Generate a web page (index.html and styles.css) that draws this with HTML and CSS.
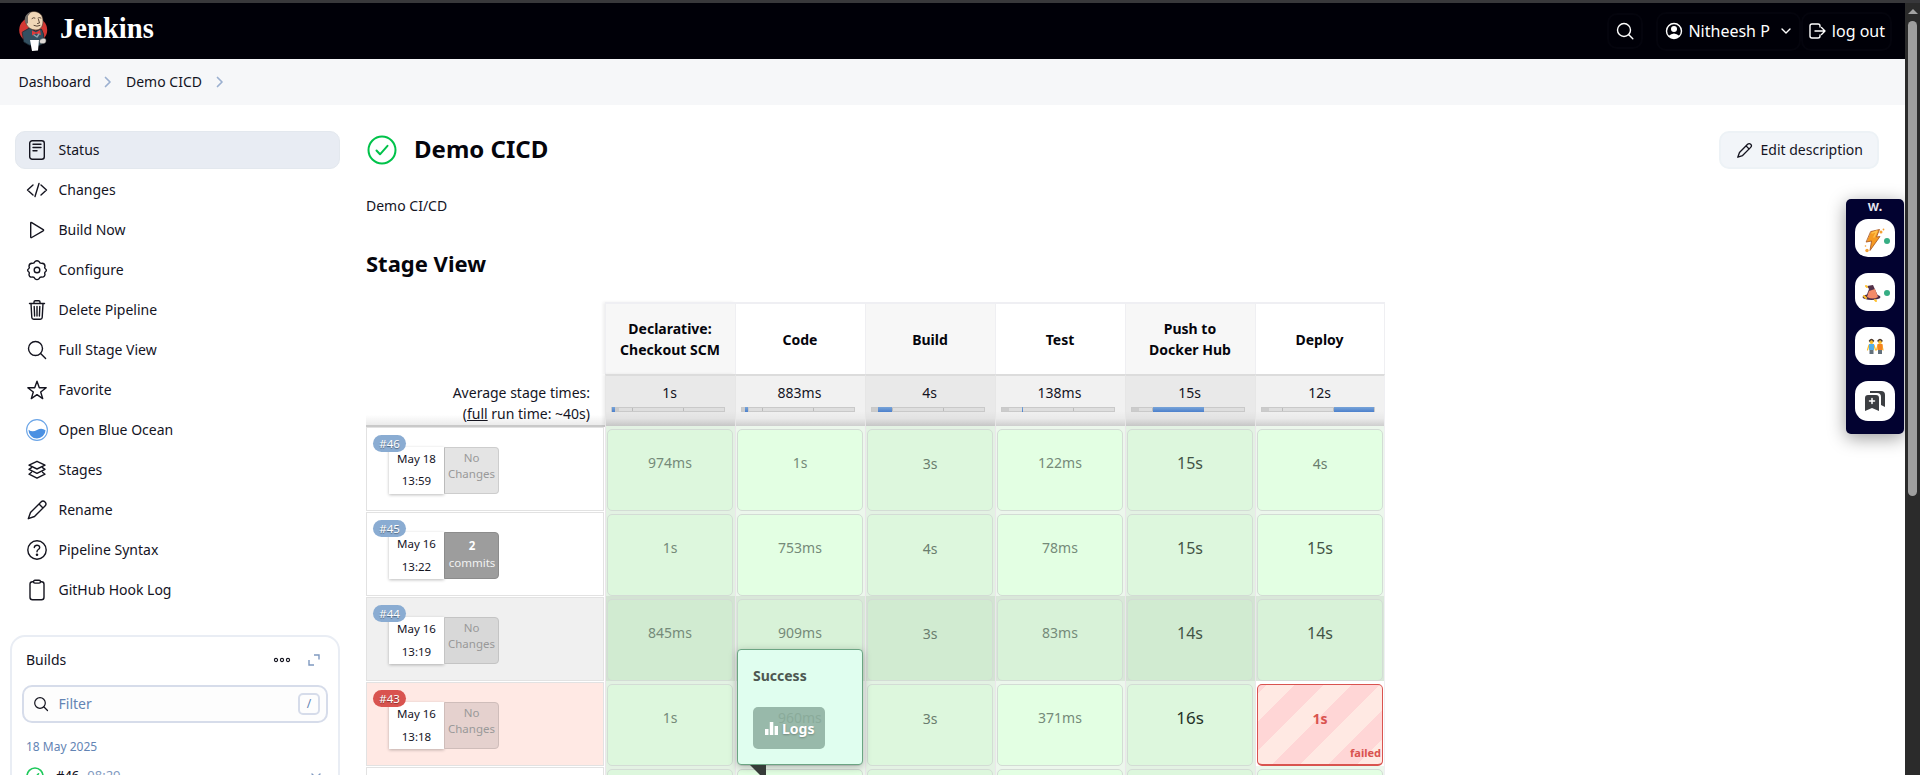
FILE: index.html
```html
<!DOCTYPE html>
<html lang="en">
<head>
<meta charset="utf-8">
<title>Demo CICD [Jenkins]</title>
<link rel="stylesheet" href="styles.css">
</head>
<body>
<div class="chrome-edge"></div>
<div class="window">
<div class="page">
  <header class="header">
    <a class="brand">
      <svg class="brand-logo" viewBox="0 0 30 42">
        <ellipse cx="15.200" cy="20" rx="14" ry="13" fill="#d33833"/>
        <path d="M4.500 22l7-4 6 3 6-2 2 5 .5 9-6 3-9-1-5-3z" fill="#335061" stroke="#1b2a33" stroke-width=".8"/>
        <path d="M7.500 11C7 5 11 1.500 16 1.500S25 5 25 11c0 6-3 9-7 9-5 0-10-3-10.500-9z" fill="#f0d6b7" stroke="#3a2c25" stroke-width=".6"/>
        <path d="M8.500 14C5 10 7 3.500 13 2l-3 4v7z" fill="#6f6a66"/>
        <path d="M14 8.500q1.500-1.500 3-.5M20 8q1.500-1 3 0M16 15.500q3 1.500 6 0M20.500 9.500l1 3.500-2 .5" fill="none" stroke="#49372a" stroke-width=".9"/>
        <path d="M14 20.500l4 2 4-2.500 1 5-5-1.500-4 2z" fill="#e03a3a"/>
        <path d="M16 25l3 2 2-3" fill="none" stroke="#8fa3ad"/>
        <path d="M12 30h9l-1 10.500-6 .5z" fill="#fff"/>
        <path d="M21.500 31c1-3 7-4 6.500 0 0 3-4 3-6 2z" fill="#ded9d5" stroke="#555" stroke-width=".5"/>
      </svg>
      <span class="brand-name">Jenkins</span>
    </a>
    <div class="header-actions">
      <a class="header-btn header-search"><svg class="icon-18" viewBox="0 0 18 18"><circle cx="8" cy="8" r="6.500"/><path d="M12.800 12.800l4 4"/></svg></a>
      <a class="header-btn header-user">
        <svg class="icon-18" viewBox="0 0 18 18"><circle cx="9" cy="9" r="7.500"/><circle cx="9" cy="7" r="3" fill="#fff" stroke="none"/><path d="M3.500 14q5.500-5 11 0-5 5-11 0z" fill="#fff" stroke="none"/></svg>
        <span>Nitheesh P</span>
        <svg class="caret" viewBox="0 0 10 10"><path d="M1 3l4 4 4-4"/></svg>
      </a>
      <a class="header-btn header-logout">
        <svg class="icon-18" viewBox="0 0 18 18"><path d="M12 5V4a2 2 0 0 0-2-2H4a2 2 0 0 0-2 2v10a2 2 0 0 0 2 2h6a2 2 0 0 0 2-2v-1M7 9h10M13.500 5.500L17 9l-3.500 3.500"/></svg>
        <span>log out</span>
      </a>
    </div>
  </header>
  <nav class="crumbs">
    <span>Dashboard</span>
    <svg viewBox="0 0 8 12"><path d="M1.500 1.500L6 6l-4.500 4.500"/></svg>
    <span>Demo CICD</span>
    <svg viewBox="0 0 8 12"><path d="M1.500 1.500L6 6l-4.500 4.500"/></svg>
  </nav>
  <div class="body">
    <aside class="side">
      <div class="tasks">
        <a class="task task-active"><svg viewBox="0 0 22 22"><rect x="3.700" y="1.700" width="14.600" height="18.600" rx="2.500"/><path d="M7 5.300h8M7 8.500h8M7 11.700h4"/></svg><span>Status</span></a>
        <a class="task"><svg viewBox="0 0 22 22"><path d="M7 6l-5.500 5L7 16M15 6l5.500 5-5.500 5M13 4.500L9 17.500"/></svg><span>Changes</span></a>
        <a class="task"><svg viewBox="0 0 22 22"><path d="M4.700 4v14q0 1 1 .5l11.500-6.700q.8-.6 0-1.200L5.700 3.600q-1-.5-1 .4z"/></svg><span>Build Now</span></a>
        <a class="task"><svg viewBox="0 0 22 22"><circle cx="11" cy="11" r="2.800"/><path d="M9 2.500Q11 .8 13 2.500q.8 2.200 3 1.800 3 0 3 3.200-.8 1.500.6 2.500 1.500 1 0 2.500-1.400 1-.6 2.800-.3 3-3 2.800-2.200-.3-3 1.700-2 1.600-4 0-.8-2-3-1.700-3 .1-3-2.800.8-1.800-.6-2.800-1.500-1.500 0-2.500 1.400-1 .6-2.500 0-3.200 3-3.200 2.200.4 3-1.800z"/></svg><span>Configure</span></a>
        <a class="task"><svg viewBox="0 0 22 22"><path d="M3.500 4.500h15M8 4.500V3q0-1.300 1.300-1.300h3.400Q14 1.700 14 3v1.500M5 4.500l.8 14q.1 1.800 1.900 1.800h6.600q1.800 0 1.900-1.800l.8-14M8.200 7.500l.4 9.500M11 7.500V17M13.800 7.500l-.4 9.500"/></svg><span>Delete Pipeline</span></a>
        <a class="task"><svg viewBox="0 0 22 22"><circle cx="9.500" cy="9.500" r="7"/><path d="M14.600 14.600l5 5"/></svg><span>Full Stage View</span></a>
        <a class="task"><svg viewBox="0 0 22 22"><path d="M11 2.200l2.300 6.500 6.900.1-5.500 4.200 2 6.600L11 15.700l-5.700 3.900 2-6.600-5.500-4.200 6.900-.1z"/></svg><span>Favorite</span></a>
        <a class="task"><svg viewBox="0 0 22 22"><circle cx="11" cy="11" r="10.400" fill="#fff" stroke="#6ba5e7" stroke-width="1.100"/><path d="M2.500 10.800q4 3 8.500.2t8.500.2A8.500 8.500 0 0 1 11 19.500a8.500 8.500 0 0 1-8.500-8.700z" fill="#4a90e2" stroke="none"/></svg><span>Open Blue Ocean</span></a>
        <a class="task"><svg viewBox="0 0 22 22"><path d="M11 2.300l8 3.900-8 3.800-8-3.800zM5.500 8.700L3 10.400l8 4 8-4-2.500-1.700M5.500 13.200L3 15.200l8 4 8-4-2.500-2"/></svg><span>Stages</span></a>
        <a class="task"><svg viewBox="0 0 22 22"><path d="M15 3q2-2 4 0t0 4L8.500 17.500 2.300 19.700 4.500 13.500zM13 5l4 4"/></svg><span>Rename</span></a>
        <a class="task"><svg viewBox="0 0 22 22"><circle cx="11" cy="11" r="9.200"/><path d="M8.300 8.500Q8.600 6.300 11 6.300t2.700 2.100q0 1.300-1.400 2.100-1.300.8-1.300 2.200"/><circle cx="11" cy="15.700" r=".6" fill="#14141f"/></svg><span>Pipeline Syntax</span></a>
        <a class="task"><svg viewBox="0 0 22 22"><rect x="4" y="2.700" width="14" height="18" rx="2.500"/><rect x="7.500" y="1.300" width="7" height="2.800" rx="1.400" fill="#fff"/></svg><span>GitHub Hook Log</span></a>
      </div>
      <section class="builds">
        <div class="builds-head"><span>Builds</span>
          <svg class="dots" viewBox="0 0 18 6"><circle cx="3" cy="3" r="1.600"/><circle cx="9" cy="3" r="1.600"/><circle cx="15" cy="3" r="1.600"/></svg>
          <svg class="expand" viewBox="0 0 12 12"><path d="M6 1h5v4.500M1 6v5h5"/></svg>
        </div>
        <div class="filter">
          <svg viewBox="0 0 16 16"><circle cx="7" cy="7" r="5.300"/><path d="M11 11l3.500 3.500"/></svg>
          <span>Filter</span><kbd>/</kbd>
        </div>
        <div class="builds-date">18 May 2025</div>
        <div class="build">
          <svg class="ok" viewBox="0 0 18 18"><circle cx="9" cy="9" r="8"/><path d="M5.500 9.500l2.500 2.300 4.500-5"/></svg>
          <b>#46</b><span>08:29</span>
          <svg class="build-caret" viewBox="0 0 10 10"><path d="M1 3l4 4 4-4"/></svg>
        </div>
      </section>
    </aside>
    <main class="main">
      <div class="title-row">
        <svg class="title-ok" viewBox="0 0 30 30"><circle cx="15" cy="15" r="13.500"/><path d="M9.500 15.500l3.500 3.800 7.500-8.500"/></svg>
        <h1>Demo CICD</h1>
        <a class="edit"><svg viewBox="0 0 22 22"><path d="M15 3q2-2 4 0t0 4L8.500 17.500 2.300 19.700 4.500 13.500zM13 5l4 4"/></svg><span>Edit description</span></a>
      </div>
      <p class="desc">Demo CI/CD</p>
      <h2>Stage View</h2>
      <div class="stages">
        <div class="row row-head">
          <div></div>
          <div class="th odd">Declarative:<br>Checkout SCM</div><div class="th">Code</div><div class="th odd">Build</div><div class="th">Test</div><div class="th odd">Push to<br>Docker Hub</div><div class="th">Deploy</div>
        </div>
        <div class="row row-avg">
          <div class="avg-label">Average stage times:<br>(<u>full</u> run time: ~40s)</div>
          <div class="avg odd"><span>1s</span><div class="bar"><i style="left:0;width:2.5%"></i></div></div>
          <div class="avg"><span>883ms</span><div class="bar"><i style="left:2.5%;width:2.5%"></i></div></div>
          <div class="avg odd"><span>4s</span><div class="bar"><i style="left:5%;width:12.5%"></i></div></div>
          <div class="avg"><span>138ms</span><div class="bar"><i style="left:17.5%;width:.9%"></i></div></div>
          <div class="avg odd"><span>15s</span><div class="bar"><i style="left:18.4%;width:45.6%"></i></div></div>
          <div class="avg"><span>12s</span><div class="bar"><i style="left:64%;width:36%"></i></div></div>
        </div>
        <div class="row run">
          <div class="run-info"><span class="badge">#46</span><div class="run-card"><div class="when first">May 18<br>13:59</div><div class="chg">No<br>Changes</div></div></div>
          <div class="td odd"><div class="cell d1">974ms</div></div><div class="td"><div class="cell d1">1s</div></div><div class="td odd"><div class="cell d2">3s</div></div><div class="td"><div class="cell d1">122ms</div></div><div class="td odd"><div class="cell d3">15s</div></div><div class="td"><div class="cell d2">4s</div></div>
        </div>
        <div class="row run">
          <div class="run-info"><span class="badge">#45</span><div class="run-card"><div class="when">May 16<br>13:22</div><div class="chg commits"><b>2</b><br>commits</div></div></div>
          <div class="td odd"><div class="cell d1">1s</div></div><div class="td"><div class="cell d1">753ms</div></div><div class="td odd"><div class="cell d2">4s</div></div><div class="td"><div class="cell d1">78ms</div></div><div class="td odd"><div class="cell d3">15s</div></div><div class="td"><div class="cell d3">15s</div></div>
        </div>
        <div class="row run hover">
          <div class="run-info"><span class="badge">#44</span><div class="run-card"><div class="when">May 16<br>13:19</div><div class="chg">No<br>Changes</div></div></div>
          <div class="td odd"><div class="cell d1">845ms</div></div><div class="td"><div class="cell d1">909ms</div></div><div class="td odd"><div class="cell d2">3s</div></div><div class="td"><div class="cell d1">83ms</div></div><div class="td odd"><div class="cell d3">14s</div></div><div class="td"><div class="cell d3">14s</div></div>
        </div>
        <div class="row run bad">
          <div class="run-info"><span class="badge">#43</span><div class="run-card"><div class="when">May 16<br>13:18</div><div class="chg">No<br>Changes</div></div></div>
          <div class="td odd"><div class="cell d1">1s</div></div>
          <div class="td"><div class="cell d1"></div>
            <div class="popup">
              <div class="popup-title">Success</div>
              <div class="popup-btn"><span class="ghost">960ms</span><svg viewBox="0 0 13 13"><path d="M0 7h3.500v6H0zM4.800 0h3.500v13H4.800zM9.600 4H13v9H9.600z"/></svg><span class="popup-label">Logs</span></div>
              <div class="popup-tail"></div>
            </div>
          </div>
          <div class="td odd"><div class="cell d2">3s</div></div><div class="td"><div class="cell d1">371ms</div></div><div class="td odd"><div class="cell d4">16s</div></div><div class="td failed"><div class="cell d2">1s<small>failed</small></div></div>
        </div>
        <div class="row run">
          <div class="run-info"></div>
          <div class="td odd"><div class="cell"></div></div><div class="td"><div class="cell"></div></div><div class="td odd"><div class="cell"></div></div><div class="td"><div class="cell"></div></div><div class="td odd"><div class="cell"></div></div><div class="td"><div class="cell"></div></div>
        </div>
      </div>
    </main>
  </div>
  <div class="dock">
    <div class="dock-title">w.</div>
    <div class="dock-item"><svg viewBox="0 0 40 38"><path d="M16 12.500l8.500-2-3 7.500 3.500-.5-10 14 1.500-9.500-5 1z" fill="#f59a23" stroke="#a4501c" stroke-width=".8"/><path d="M17 14l5-2-3 6" fill="none" stroke="#ffc04a" stroke-width="1.500"/><circle cx="26" cy="13" r="1.500" fill="#f5a033"/><circle cx="28.500" cy="10.500" r=".9" fill="#f5a033"/><circle cx="12" cy="31.500" r="1.700" fill="#f5a033"/><circle cx="10.500" cy="27" r=".8" fill="#f5a033"/></svg><i class="dot"></i></div>
    <div class="dock-item"><svg viewBox="0 0 40 38"><ellipse cx="16.500" cy="24" rx="9" ry="3" fill="#4b2b45"/><path d="M11 24l3-8-2-3 6-1 5 11q-6 4-12 1z" fill="#533149"/><path d="M12 24l2-6 6-2 3 8q-5 3-11 0z" fill="#f48a68"/><path d="M9 23l2 2M11 13l1 1M20 27l1 1" stroke="#ffc12e" stroke-width="2"/></svg><i class="dot dot-up"></i></div>
    <div class="dock-item"><svg viewBox="0 0 40 38"><g stroke="#f9bd2b" stroke-width="1.200"><path d="M14 18l-1.500 5M19 18l1.500 5M23 18l-1.500 5M27 18l1 5"/></g><path d="M14 17h5v6h-5z" fill="#55aee8"/><path d="M22.500 17h5v6h-5z" fill="#f58220"/><path d="M14.500 23h4v4h-4zM23 23h4v4h-4z" fill="#63707a"/><circle cx="16.500" cy="15" r="2" fill="#f9bd2b"/><circle cx="25" cy="15" r="2" fill="#f9bd2b"/><path d="M14.500 14q2-3 4 0M23 14q2-3 4 0" fill="none" stroke="#4d392c" stroke-width="1.500"/></svg></div>
    <div class="dock-item dock-tall"><svg viewBox="0 0 40 40"><path d="M15 10h11q4 0 4 4v12l-4-2v-8q0-4-4-4h-7z" fill="#3c3e42"/><path d="M13 14h8q3 0 3 3v13l-7-3-7 3V17q0-3 3-3z" fill="#3c3e42"/><path d="M17 17.500v5M14.500 20h5" stroke="#fff" stroke-width="1.500"/></svg></div>
  </div>
</div>
<div class="scroll"><div class="scroll-up"></div><div class="scroll-thumb"></div></div>
</div>
</body>
</html>
```
FILE: styles.css
```css
* { box-sizing: border-box; }
body {
  margin: 0;
  height: 775px;
  overflow: hidden;
  font: 14px/21px "Noto Sans", sans-serif;
  color: #14141f;
  background: #fff;
}
svg { display: block; flex: none; fill: none; stroke: currentColor; stroke-width: 1.4; stroke-linecap: round; stroke-linejoin: round; }
.chrome-edge { height: 3px; background: #38383b; }
.window { display: flex; height: 772px; }
.page { position: relative; width: 1905px; height: 772px; overflow: hidden; }

.scroll { width: 15px; background: #2b2b2b; display: flex; flex-direction: column; align-items: center; }
.scroll-up { margin-top: 6px; border: 5px solid transparent; border-top: 0; border-bottom: 5px solid #a2a2a2; }
.scroll-thumb { margin-top: 7px; width: 9px; height: 475px; border-radius: 5px; background: #9f9f9f; }

.header { display: flex; align-items: center; justify-content: space-between; height: 56px; padding: 0 13px 0 18px; background: #000008; color: #fff; }
.brand { display: flex; align-items: center; gap: 12px; }
.brand-logo { width: 30px; height: 42px; stroke: none; }
.brand-name { font: bold 28.600px/36px "Liberation Serif", serif; padding-bottom: 5px; }
.header-actions { display: flex; align-items: center; font-size: 16px; }
.header-btn { display: flex; align-items: center; gap: 6px; height: 39px; border: 2px solid #04040d; border-radius: 10px; }
.icon-18 { width: 18px; height: 18px; }
.header-search { width: 36px; height: 36px; justify-content: center; margin-right: 13px; }
.header-user { padding: 0 8px 0 7px; gap: 5px; }
.header-logout { padding: 0 5px 0 5px; }
.caret { width: 10px; height: 10px; margin-left: 6px; }

.crumbs { display: flex; align-items: center; height: 46px; padding: 0 0 1px 18.500px; background: #f6f7f9; gap: 13.500px; }
.crumbs svg { width: 8px; height: 12px; color: #9bb0d0; stroke-width: 1.700; }
.crumbs svg:last-child { margin-left: 1px; }

.body { display: flex; }
.side { width: 340px; padding: 26px 0 0 10px; flex: none; }
.tasks { display: flex; flex-direction: column; gap: 2px; padding-left: 5px; }
.task { display: flex; align-items: center; gap: 10.500px; height: 38px; padding-left: 11px; border-radius: 10px; }
.task svg { width: 22px; height: 22px; }
.task span, .edit span { padding-bottom: 2px; }
.task-active { background: #e8ecf3; border: 1px solid #e3e8ee; padding-left: 10px; }
.builds { margin-top: 26px; height: 200px; border: 2px solid #e9edf4; border-radius: 15px; padding: 0 10px; }
.builds-head { display: flex; align-items: center; height: 48px; padding: 0 8px 2px 4px; }
.builds-head span { padding-bottom: 1px; }
.dots { width: 18px; height: 6px; margin-left: auto; stroke-width: 1.100; }
.expand { width: 12px; height: 12px; margin-left: 17px; color: #7f99c0; stroke-linecap: butt; stroke-linejoin: miter; }
.filter { display: flex; align-items: center; height: 38px; border: 2px solid #d6dcea; border-radius: 10px; background: #fdfdfd; padding: 0 6px 0 9px; color: #6384b4; }
.filter span { padding-bottom: 1px; }
.filter svg { width: 16px; height: 16px; color: #14141f; margin-right: 9.500px; stroke-width: 1.200; }
.filter kbd { margin-left: auto; width: 22px; height: 22px; border: 2px solid #d6dcea; border-radius: 5px; font: 12px/18px "Noto Sans", sans-serif; text-align: center; }
.builds-date { padding: 13px 4px 0; font-size: 12px; color: #6384b4; }
.build { display: flex; align-items: center; padding: 8px 7px 0 4px; gap: 9px; color: #7f99c0; }
.build b { color: #14141f; font-weight: 500; font-size: 13px; margin-left: 3px; }
.build span { font-size: 13px; margin-left: -1px; }
.ok { width: 18px; height: 18px; color: #1ec95b; stroke-width: 1.600; }
.build-caret { width: 10px; height: 10px; margin-left: auto; }

.main { flex: 1; padding: 26px 26px 0 26px; }
.title-row { display: flex; align-items: center; height: 38px; }
.title-ok { width: 30px; height: 30px; margin-left: 1px; color: #00c24a; stroke-width: 2; }
h1 { margin: 0 0 0 17px; padding-bottom: 2px; font-size: 24px; line-height: 32px; color: #05050c; }
.edit { display: flex; align-items: center; gap: 8px; margin-left: auto; height: 38px; width: 160px; padding-left: 14.500px; border: 2px solid #edf2f6; border-radius: 10px; background: #f2f5f9; }
.edit svg { width: 17px; height: 17px; stroke-width: 1.700; }
.desc { margin: 26px 0 0; }
h2 { margin: 32px 0 0; font-size: 22px; line-height: 30px; color: #05050c; }

.stages { margin-top: 24px; width: 1020px; }
.row { display: grid; grid-template-columns: 239px repeat(6, 130px); }
.row-head { height: 72px; }
.th { display: flex; align-items: center; justify-content: center; text-align: center; font-weight: 700; color: #05050c; border-left: 1px solid #efeff2; border-top: 2px solid #efeff3; background: #fff; padding-right: 1px; }
.th:last-child, .avg:last-child, .td:last-child { border-right: 1px solid #efeff2; }
.th.odd { background: #f7f7f7; }
.th:nth-child(2), .avg:nth-child(2) { box-shadow: -2px 0 3px #0001; }
.row-avg { height: 52px; }
.avg-label { text-align: right; padding: 8px 15px 0 0; border-bottom: 2px solid #c9c9c9; background: linear-gradient(#fff 80%, #ebebeb); margin-bottom: -1px; }
.avg { text-align: center; padding: 6px 10px 0 5px; border-left: 1px solid #e6e6e6; border-top: 2px solid #dcdcdc; background: linear-gradient(#f1f1f1 70%, #eaeaea 85%, #cecece); }
.avg:last-child { padding-right: 9px; }
.avg span { padding-left: 3px; }
.avg.odd { background: linear-gradient(#e9e9e9 70%, #e2e2e2 85%, #c6c6c6); }
.bar { position: relative; height: 5px; margin-top: 4px; border: 1px solid #c9c9c9; background: linear-gradient(90deg, #ccc 6%, #dedede 6% 17.500%, #bbb 17.500% 18.500%, #dedede 18.500% 63%, #bbb 63% 64.500%, #dedede 64.500%); }
.bar i { position: absolute; top: -1px; height: 5px; background: linear-gradient(#78a4d8, #4c80cc); }

.run { height: 85px; }
.run-info { position: relative; margin: 1px 1px 1px 0; border: 1px solid #e2e2e2; background: #fff; }
.badge { position: absolute; z-index: 2; left: 6px; top: 7px; width: 33px; height: 17px; border-radius: 9px; background: #8aacd2; color: #fff; font-size: 11.500px; line-height: 17px; text-align: center; text-shadow: 0 1px 1px #0006; }
.run-card { display: flex; margin: 19px 0 0 22px; height: 47px; }
.when { width: 55px; background: #fff; font-size: 11.500px; line-height: 22.500px; padding-top: 1px; text-align: center; box-shadow: 0 1px 3px #0004; }
.when.first { line-height: 22px; }
.chg { width: 55px; background: #e4e4e4; border: 1px solid #cdcdcd; border-left: 1px solid #bbb; border-radius: 0 4px 4px 0; font-size: 11.500px; line-height: 15.500px; padding: 2px 0 0; text-align: center; color: #999; }
.chg.commits { background: #9d9d9d; border-color: #8c8c8c; color: #f2f2f2; line-height: 17px; padding: 4px 0 0 1px; }
.chg b { color: #fff; }
.hover .run-info { background: #f0f0f0; }
.hover .chg { background: #d8d8d8; border-color: #c4c4c4; }
.bad .run-info { background: #ffe9e4; }
.bad .badge { background: #d9534f; }
.bad .chg { background: #e5d1ce; border-color: #cfbdba; }
.td { position: relative; display: flex; padding: 3px 2px 1px 1px; border-left: 1px solid #ebe6eb; background: #ecf7ec; }
.td:last-child { padding-right: 1px; }
.td.odd { background: #e3f2e3; }
.cell { flex: 1; position: relative; border: 1px solid #d3dcd5; border-radius: 5px; background: #e3ffe3; text-align: center; line-height: 22px; padding-top: 22px; height: 82px; color: #76877a; }
.odd .cell { background: #ddf7dd; }
.hover .cell { background: #d8f2d8; }
.hover .odd .cell { background: #d1ebd1; }
.hover .td { background: #d9e8d9; }
.hover .td.odd { background: #d3e3d3; }
.cell.d1 { color: #758a79; }
.cell.d2 { color: #6a7d6e; padding-top: 23px; }
.cell.d3 { font-size: 16px; color: #435446; }
.cell.d4 { font-size: 17px; color: #243228; }
.failed .cell.d2 { border: 1px solid #d9534f; border-bottom-width: 2px; background: repeating-linear-gradient(135deg, #ffd6d6 0 6px, #ffe9e3 6px 26px, #ffd6d6 26px 40px); color: #d9534f; font-weight: 700; }
.td.failed { background: #fff; }
.failed small { position: absolute; right: 1px; bottom: 0; font-size: 11px; }

.popup { position: absolute; z-index: 5; left: 1px; top: -32px; width: 126px; height: 116px; border: 1px solid #6ba583; border-radius: 4px; background: #e0feef; box-shadow: 0 2px 8px #0004; padding: 15px 0 0 15px; }
.popup-title { font-weight: 700; line-height: 21px; color: #4d5751; }
.popup-btn { position: relative; display: flex; align-items: center; gap: 4px; margin-top: 21px; width: 72px; height: 42px; padding-left: 12px; border-radius: 5px; background: #98b9aa; color: #fff; font-weight: 700; text-shadow: 0 1px 2px #0004; }
.popup-btn svg { width: 13px; height: 13px; fill: #fff; stroke: none; }
.ghost { position: absolute; left: 25px; top: 0; color: #8aab9a; font-weight: 400; text-shadow: none; }
.popup-label { position: relative; }
.popup-tail { position: absolute; left: 12px; top: 115px; width: 0; height: 0; border-left: 16px solid transparent; border-top: 16px solid #363b38; }

.dock { position: absolute; z-index: 6; right: 1px; top: 196px; width: 58px; height: 235px; border-radius: 5px; background: #020230; box-shadow: 0 4px 18px #0006; display: flex; flex-direction: column; align-items: center; gap: 16px; }
.dock-title { height: 4px; color: #e6e6ef; font: 600 14px/14px "Inter", sans-serif; }
.dock-item { position: relative; width: 40px; height: 38px; border-radius: 13px; background: #fff; }
.dock-item svg { width: 40px; height: 38px; stroke-width: 0; }
.dock .dock-tall, .dock-tall svg { height: 40px; }
.dot { position: absolute; left: 29px; top: 19px; width: 6px; height: 6px; border-radius: 50%; background: #36ae84; }
.dot-up { top: 17px; }
```
